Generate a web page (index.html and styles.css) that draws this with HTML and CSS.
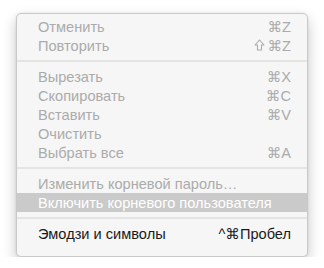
FILE: index.html
```html
<!DOCTYPE html>
<html>
<head>
<meta charset="utf-8">
<link rel="stylesheet" href="styles.css">
</head>
<body>
<div class="menu">
  <div class="item dis"><span class="label">Отменить</span><span class="key">⌘Z</span></div>
  <div class="item dis"><span class="label">Повторить</span><span class="key"><svg class="shift" width="11" height="12" viewBox="0 0 11 12"><path d="M5.5 1 L10 6 H7.5 V11 H3.5 V6 H1 Z" fill="none" stroke="currentColor" stroke-width="1.1" stroke-linejoin="round"/></svg>⌘Z</span></div>
  <div class="sep"></div>
  <div class="item dis"><span class="label">Вырезать</span><span class="key">⌘X</span></div>
  <div class="item dis"><span class="label">Скопировать</span><span class="key">⌘C</span></div>
  <div class="item dis"><span class="label">Вставить</span><span class="key">⌘V</span></div>
  <div class="item dis"><span class="label">Очистить</span></div>
  <div class="item dis"><span class="label">Выбрать все</span><span class="key">⌘A</span></div>
  <div class="sep"></div>
  <div class="item dis"><span class="label">Изменить корневой пароль…</span></div>
  <div class="item hl"><span class="label">Включить корневого пользователя</span></div>
  <div class="sep"></div>
  <div class="item"><span class="label">Эмодзи и символы</span><span class="key">^⌘Пробел</span></div>
</div>
</body>
</html>
```
FILE: styles.css
```css
html, body {
  margin: 0;
  padding: 0;
  background: #ffffff;
}
body {
  padding: 13px 0 0 16px;
}
.menu {
  width: 290px;
  background: #f6f6f6;
  border: 1px solid #c9c9c9;
  border-radius: 5px;
  box-shadow: 0 6px 14px rgba(0, 0, 0, 0.22), 0 0 3px rgba(0, 0, 0, 0.08);
  padding: 3px 0 13px 0;
  font-family: "Liberation Sans", Arial, sans-serif;
  font-size: 14.6px;
  color: #1a1a1a;
}
.item {
  height: 19px;
  display: flex;
  align-items: center;
  justify-content: space-between;
  padding: 0 16px 0 21px;
  white-space: nowrap;
}
.dis {
  color: #ababab;
}
.hl {
  background: #cacaca;
  color: #ffffff;
}
.key {
  display: flex;
  align-items: center;
  font-family: "Liberation Sans", "DejaVu Sans", sans-serif;
}
.shift {
  margin-right: 2px;
  margin-top: -1px;
}
.sep {
  height: 2px;
  margin: 5px 0;
  background: #e4e4e4;
}
```
